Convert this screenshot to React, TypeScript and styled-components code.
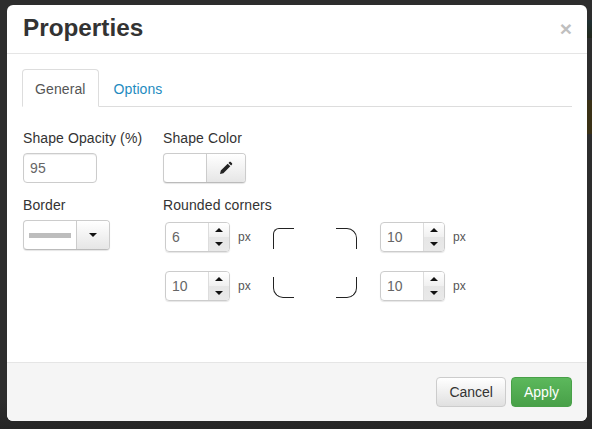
import React from 'react'
import styled, { createGlobalStyle } from 'styled-components'

const Global = createGlobalStyle`
  html, body {
    margin: 0;
    padding: 0;
    height: 100%;
    background: #2a2b2b;
  }
  * { box-sizing: border-box; }
`

// the dimmed page behind the dialog only shows as faint strips at the right edge
const Page = styled.div`
  width: 592px;
  height: 429px;
  padding: 5px 5px 8px 7px;
  overflow: hidden;
  font-family: 'Liberation Sans', Arial, sans-serif;
  font-size: 14px;
  letter-spacing: 0.1px;
  color: #333;
  background:
    linear-gradient(#3a3116, #3a3116) right 100px / 5px 34px no-repeat,
    linear-gradient(#1f3033, #23281c) right 20px / 5px 18px no-repeat,
    linear-gradient(#2d2d2d, #2d2d2d 400px, #252525);
`

const Dialog = styled.div`
  width: 580px;
  height: 416px;
  display: flex;
  flex-direction: column;
  background: #fff;
  border-radius: 6px;
  overflow: hidden;
`

const Header = styled.div`
  height: 49px;
  flex: none;
  display: flex;
  align-items: center;
  justify-content: space-between;
  padding: 0 15px 2px 16px;
  border-bottom: 1px solid #e5e5e5;
`

const Title = styled.h4`
  margin: 0;
  font-size: 24.3px;
  font-weight: bold;
  line-height: 1;
  letter-spacing: 0;
  color: #333;
`

const Close = styled.span`
  font-size: 21px;
  font-weight: bold;
  line-height: 1;
  color: #bfbfbf;
`

const Body = styled.div`
  flex: 1;
  padding: 15px 15px 0 15px;
`

const Tabs = styled.div`
  display: flex;
  height: 38px;
  border-bottom: 1px solid #ddd;
`

const Tab = styled.div<{ $active?: boolean }>`
  height: 38px;
  padding: 10px 12px 0 12px;
  line-height: 18px;
  margin-right: 2px;
  border-radius: 4px 4px 0 0;
  border: 1px solid ${p => (p.$active ? '#ddd' : 'transparent')};
  border-bottom-color: ${p => (p.$active ? '#fff' : 'transparent')};
  background: ${p => (p.$active ? '#fff' : 'transparent')};
  color: ${p => (p.$active ? '#555' : '#1f8bc0')};
`

const Form = styled.div`
  display: grid;
  grid-template-columns: 140px 1fr;
  padding: 21px 0 0 1px;
`

const Field = styled.div`
  margin-bottom: 10px;
`

const Label = styled.div`
  line-height: 20px;
  margin-bottom: 5px;
  color: #333;
`

const TextInput = styled.div<{ $w: number }>`
  width: ${p => p.$w}px;
  height: 30px;
  padding: 0 6px;
  line-height: 28px;
  border: 1px solid #ccc;
  border-radius: 4px;
  background: #fff;
  color: #666;
  box-shadow: inset 0 1px 1px rgba(0, 0, 0, 0.075);
`

const ButtonGroup = styled.div`
  display: inline-flex;
  height: 30px;
  border: 1px solid #ccc;
  border-bottom-color: #bbb;
  border-radius: 4px;
  overflow: hidden;
  background: #fff;
  box-shadow: 0 1px 1px rgba(0, 0, 0, 0.1);
`

const Swatch = styled.div<{ $w: number }>`
  width: ${p => p.$w}px;
  display: flex;
  align-items: center;
  padding: 0 5px;
  border-right: 1px solid #ccc;
`

const BorderLine = styled.div`
  width: 46px;
  height: 5px;
  background: #bdbdbd;
`

const Addon = styled.div<{ $w: number }>`
  width: ${p => p.$w}px;
  display: flex;
  align-items: center;
  justify-content: center;
  background: linear-gradient(to bottom, #fff, #e6e6e6);
  color: #222;
`

const Caret = styled.div`
  width: 0;
  height: 0;
  border-left: 4px solid transparent;
  border-right: 4px solid transparent;
  border-top: 4px solid #111;
`

const CornerGrid = styled.div`
  display: grid;
  grid-template-columns: 108px 107px auto;
  grid-auto-rows: 30px;
  row-gap: 19px;
  margin: 7px 0 0 2px;
  align-items: center;
  width: 320px;
`

const SpinBox = styled.div`
  display: flex;
  align-items: center;
  gap: 8px;
  font-size: 12px;
  letter-spacing: 0;
  color: #555;
`

const Spinner = styled.div`
  display: flex;
  width: 65px;
  height: 30px;
  border: 1px solid #ccc;
  border-radius: 4px;
  overflow: hidden;
  box-shadow: 0 1px 1px rgba(0, 0, 0, 0.1);
`

const SpinValue = styled.div`
  width: 43px;
  padding-left: 6px;
  line-height: 28px;
  font-size: 14px;
  color: #666;
  border-right: 1px solid #ddd;
`

const SpinButtons = styled.div`
  flex: 1;
  display: flex;
  flex-direction: column;
`

const SpinButton = styled.div<{ $down?: boolean }>`
  flex: 1;
  display: flex;
  align-items: center;
  justify-content: center;
  background: ${p => (p.$down ? 'linear-gradient(to bottom, #e6e6e6, #e9e9e9)' : 'linear-gradient(to bottom, #fff, #f0f0f0)')};
`

const Arrow = styled.div<{ $down?: boolean }>`
  width: 0;
  height: 0;
  border-left: 4px solid transparent;
  border-right: 4px solid transparent;
  ${p => (p.$down ? 'border-top: 4px solid #111;' : 'border-bottom: 4px solid #111;')}
`

const CornerBox = styled.div`
  width: 84px;
  height: 21px;
  margin-top: 2px;
  display: flex;
  justify-content: space-between;
`

const Corner = styled.div<{ $v: 'top' | 'bottom'; $h: 'left' | 'right'; $r: number }>`
  width: 21px;
  height: 21px;
  border-${p => p.$v}: 1.5px solid #222;
  border-${p => p.$h}: 1.5px solid #222;
  border-${p => p.$v}-${p => p.$h}-radius: ${p => p.$r}px;
`

const Footer = styled.div`
  height: 59px;
  flex: none;
  display: flex;
  justify-content: flex-end;
  gap: 5px;
  padding: 14px 15px 0 0;
  background: #f5f5f5;
  border-top: 1px solid #e5e5e5;
`

const Button = styled.div<{ $primary?: boolean }>`
  height: 30px;
  padding: 0 12px;
  display: flex;
  align-items: center;
  letter-spacing: 0;
  border-radius: 4px;
  border: 1px solid ${p => (p.$primary ? '#48a048' : '#ccc')};
  background: ${p => (p.$primary ? 'linear-gradient(to bottom, #5cb85c, #48a048)' : 'linear-gradient(to bottom, #fff, #e0e0e0)')};
  color: ${p => (p.$primary ? '#fff' : '#333')};
`

const Pencil = () => (
  <svg width="14" height="14" viewBox="0 0 14 14">
    <path d="M1 13l.8-3.4 6.9-6.9 2.6 2.6-6.9 6.9z M9.5 1.9l.9-.9c.4-.4 1-.4 1.4 0l1.2 1.2c.4.4.4 1 0 1.4l-.9.9z" fill="#222" />
  </svg>
)

const NumberBox = ({ value }: { value: number }) => (
  <SpinBox>
    <Spinner>
      <SpinValue>{value}</SpinValue>
      <SpinButtons>
        <SpinButton><Arrow /></SpinButton>
        <SpinButton $down><Arrow $down /></SpinButton>
      </SpinButtons>
    </Spinner>
    px
  </SpinBox>
)

export default function App() {
  return (
    <Page>
      <Global />
      <Dialog>
        <Header>
          <Title>Properties</Title>
          <Close>×</Close>
        </Header>
        <Body>
          <Tabs>
            <Tab $active>General</Tab>
            <Tab>Options</Tab>
          </Tabs>
          <Form>
            <Field>
              <Label>Shape Opacity (%)</Label>
              <TextInput $w={74}>95</TextInput>
            </Field>
            <Field>
              <Label>Shape Color</Label>
              <ButtonGroup>
                <Swatch $w={43} />
                <Addon $w={38}><Pencil /></Addon>
              </ButtonGroup>
            </Field>
            <Field>
              <Label>Border</Label>
              <ButtonGroup>
                <Swatch $w={53}><BorderLine /></Swatch>
                <Addon $w={32}><Caret /></Addon>
              </ButtonGroup>
            </Field>
            <Field>
              <Label>Rounded corners</Label>
              <CornerGrid>
                <NumberBox value={6} />
                <CornerBox>
                  <Corner $v="top" $h="left" $r={6} />
                  <Corner $v="top" $h="right" $r={10} />
                </CornerBox>
                <NumberBox value={10} />
                <NumberBox value={10} />
                <CornerBox>
                  <Corner $v="bottom" $h="left" $r={10} />
                  <Corner $v="bottom" $h="right" $r={10} />
                </CornerBox>
                <NumberBox value={10} />
              </CornerGrid>
            </Field>
          </Form>
        </Body>
        <Footer>
          <Button>Cancel</Button>
          <Button $primary>Apply</Button>
        </Footer>
      </Dialog>
    </Page>
  )
}
